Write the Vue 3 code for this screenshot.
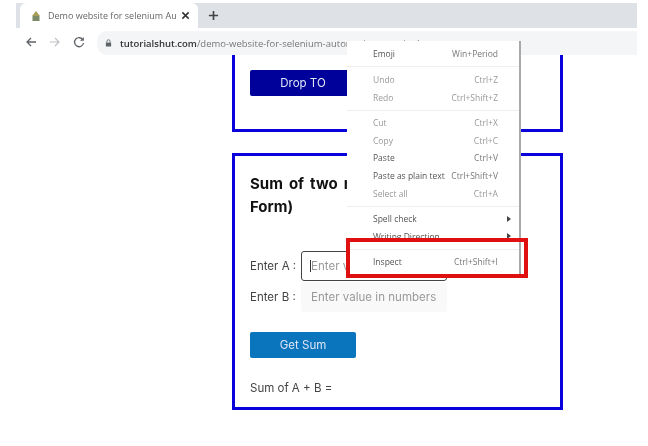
<script setup>
const menuGroups = [
  [{ label: 'Emoji', keys: 'Win+Period' }],
  [
    { label: 'Undo', keys: 'Ctrl+Z', muted: true },
    { label: 'Redo', keys: 'Ctrl+Shift+Z', muted: true }
  ],
  [
    { label: 'Cut', keys: 'Ctrl+X', muted: true },
    { label: 'Copy', keys: 'Ctrl+C', muted: true },
    { label: 'Paste', keys: 'Ctrl+V' },
    { label: 'Paste as plain text', keys: 'Ctrl+Shift+V' },
    { label: 'Select all', keys: 'Ctrl+A', muted: true }
  ],
  [
    { label: 'Spell check', arrow: true },
    { label: 'Writing Direction', arrow: true }
  ],
  [{ label: 'Inspect', keys: 'Ctrl+Shift+I' }]
]
</script>

<template>
  <div class="page">
    <header class="browser">
      <div class="tabstrip">
        <div class="tab">
          <svg class="favicon" viewBox="0 0 12 12" width="12" height="12">
            <path d="M6 1 L10 6 H2 Z" fill="#a8a05a" />
            <rect x="2.5" y="6" width="7" height="5" fill="#7d8a6a" />
          </svg>
          <span class="tab-title">Demo website for selenium Aut</span>
          <svg class="tab-close" viewBox="0 0 10 10" width="9" height="9">
            <path d="M1.5 1.5 L8.5 8.5 M8.5 1.5 L1.5 8.5" stroke="#333" stroke-width="1.7" />
          </svg>
        </div>
        <svg class="new-tab" viewBox="0 0 12 12" width="11" height="11">
          <path d="M6 1 V11 M1 6 H11" stroke="#444" stroke-width="1.8" />
        </svg>
      </div>
      <div class="toolbar">
        <svg class="nav-icon" viewBox="0 0 12 12" width="12" height="12">
          <path d="M11 6 H2 M6 2 L2 6 L6 10" fill="none" stroke="#5f6368" stroke-width="1.3" />
        </svg>
        <svg class="nav-icon" viewBox="0 0 12 12" width="12" height="12">
          <path d="M1 6 H10 M6 2 L10 6 L6 10" fill="none" stroke="#bcc0c4" stroke-width="1.1" />
        </svg>
        <svg class="nav-icon" viewBox="0 0 12 12" width="12" height="12">
          <path d="M10 4 A4.5 4.5 0 1 0 10.5 7" fill="none" stroke="#5f6368" stroke-width="1.3" />
          <path d="M10.8 1 V4.8 H7" fill="#5f6368" />
        </svg>
        <div class="urlbar">
          <svg viewBox="0 0 8 9" width="7" height="8">
            <rect x="1" y="4" width="6" height="4.5" fill="#5f6368" />
            <path d="M2.2 4 V2.6 a1.8 1.8 0 0 1 3.6 0 V4" fill="none" stroke="#5f6368" stroke-width="1" />
          </svg>
          <span class="url"><b>tutorialshut.com</b>/demo-website-for-selenium-automation-practice/</span>
        </div>
      </div>
    </header>

    <main class="content">
      <section class="card card-top">
        <button class="btn btn-drop">Drop TO</button>
      </section>

      <section class="card card-sum">
        <h2>Sum of two numbers (Using Form)</h2>
        <div class="field">
          <label>Enter A :</label>
          <div class="input input-focus"><i class="caret"></i>Enter value in numbers</div>
        </div>
        <div class="field">
          <label>Enter B :</label>
          <div class="input">Enter value in numbers</div>
        </div>
        <button class="btn btn-sum">Get Sum</button>
        <p class="result">Sum of A + B =</p>
      </section>
    </main>

    <div class="menu">
      <div v-for="(group, i) in menuGroups" :key="i" class="menu-group">
        <div v-for="item in group" :key="item.label" class="menu-item" :class="{ muted: item.muted }">
          <span>{{ item.label }}</span>
          <span v-if="item.keys" class="keys">{{ item.keys }}</span>
          <span v-if="item.arrow" class="arrow"></span>
        </div>
      </div>
    </div>

    <div class="highlight"></div>
  </div>
</template>

<style scoped>
.page {
  position: relative;
  width: 648px;
  height: 446px;
  overflow: hidden;
  background: #fff;
  font-family: Inter, "Liberation Sans", sans-serif;
  color: #333;
  filter: blur(0.4px);
}

.browser {
  margin: 3px 11px 0 16px;
}

.tabstrip {
  display: flex;
  align-items: center;
  height: 25px;
  padding-left: 4px;
  background: #dee1e6;
}

.tab {
  display: flex;
  align-items: center;
  width: 178px;
  height: 25px;
  padding: 0 8px 0 10px;
  box-sizing: border-box;
  background: #fff;
  border-radius: 6px 6px 0 0;
}

.tab-title {
  flex: 1;
  margin-left: 6px;
  overflow: hidden;
  white-space: nowrap;
  font-family: "Open Sans", sans-serif;
  font-size: 9px;
  color: #666;
}

.tab-close {
  margin-left: 4px;
}

.new-tab {
  margin-left: 10px;
}

.toolbar {
  display: flex;
  align-items: center;
  gap: 12px;
  height: 27px;
  padding-left: 9px;
  background: #fff;
}

.urlbar {
  display: flex;
  flex: 1;
  align-items: center;
  align-self: flex-end;
  gap: 8px;
  height: 24px;
  min-width: 0;
  padding-left: 8px;
  background: #f4f5f6;
  border-radius: 10px 0 0 10px;
}

.url {
  overflow: hidden;
  white-space: nowrap;
  font-family: "Open Sans", sans-serif;
  font-size: 9.5px;
  color: #777;
}

.url b {
  font-weight: 600;
  color: #333;
}

.content {
  display: flex;
  flex-direction: column;
  gap: 21px;
  width: 331px;
  margin-left: 232px;
}

.card {
  box-sizing: border-box;
  border: 3px solid #0a00dc;
  padding: 0 15px;
}

.card-top {
  height: 77px;
  padding-top: 15px;
  border-top: 0;
}

.card-sum {
  height: 257px;
  padding-top: 16px;
}

.btn {
  display: block;
  width: 106px;
  height: 26px;
  padding: 0;
  border: 0;
  border-radius: 2px;
  font-family: Inter, sans-serif;
  font-size: 11.5px;
  color: #dfe6f5;
}

.btn-drop {
  background: #00009a;
}

.btn-sum {
  margin-top: 20px;
  background: #0a74bd;
}

h2 {
  width: 240px;
  margin: 0 0 33px;
  font-size: 15px;
  font-weight: 700;
  line-height: 23px;
  word-spacing: 2.5px;
  color: #111;
}

.field {
  display: flex;
  align-items: center;
  margin-bottom: 1px;
  font-size: 11.5px;
  color: #444;
}

label {
  width: 51px;
  white-space: nowrap;
}

.input {
  display: flex;
  align-items: center;
  width: 146px;
  height: 30px;
  padding-left: 10px;
  box-sizing: border-box;
  background: #f9f9f9;
  border-radius: 3px;
  white-space: nowrap;
  overflow: hidden;
  font-size: 11.5px;
  letter-spacing: 0.03px;
  color: #999;
}

.input-focus {
  background: #fff;
  border: 1px solid #444;
  padding-left: 8px;
}

.caret {
  width: 1px;
  height: 12px;
  background: #333;
}

.result {
  margin: 23px 0 0;
  font-size: 11.5px;
  color: #444;
}

.menu {
  position: absolute;
  left: 347px;
  top: 41px;
  width: 174px;
  padding-top: 1px;
  box-sizing: border-box;
  background: #fff;
  border-right: 2px solid #a9a9a9;
  font-family: "Open Sans", sans-serif;
  font-size: 8.5px;
  color: #555;
}

.menu-group {
  padding: 3px 0 3.8px;
  border-bottom: 1px solid #eee;
}

.menu-group:last-child {
  border-bottom: 0;
}

.menu-item {
  display: flex;
  justify-content: space-between;
  align-items: center;
  height: 17.7px;
  padding: 0 21px 0 26px;
  white-space: nowrap;
}

.muted {
  color: #999;
}

.keys {
  color: #777;
}

.muted .keys {
  color: #999;
}

.arrow {
  width: 0;
  height: 0;
  margin-right: -13px;
  border-left: 4px solid #444;
  border-top: 3px solid transparent;
  border-bottom: 3px solid transparent;
}

.highlight {
  position: absolute;
  left: 346px;
  top: 238px;
  width: 182px;
  height: 40px;
  box-sizing: border-box;
  border: 4px solid #e01010;
}
</style>
